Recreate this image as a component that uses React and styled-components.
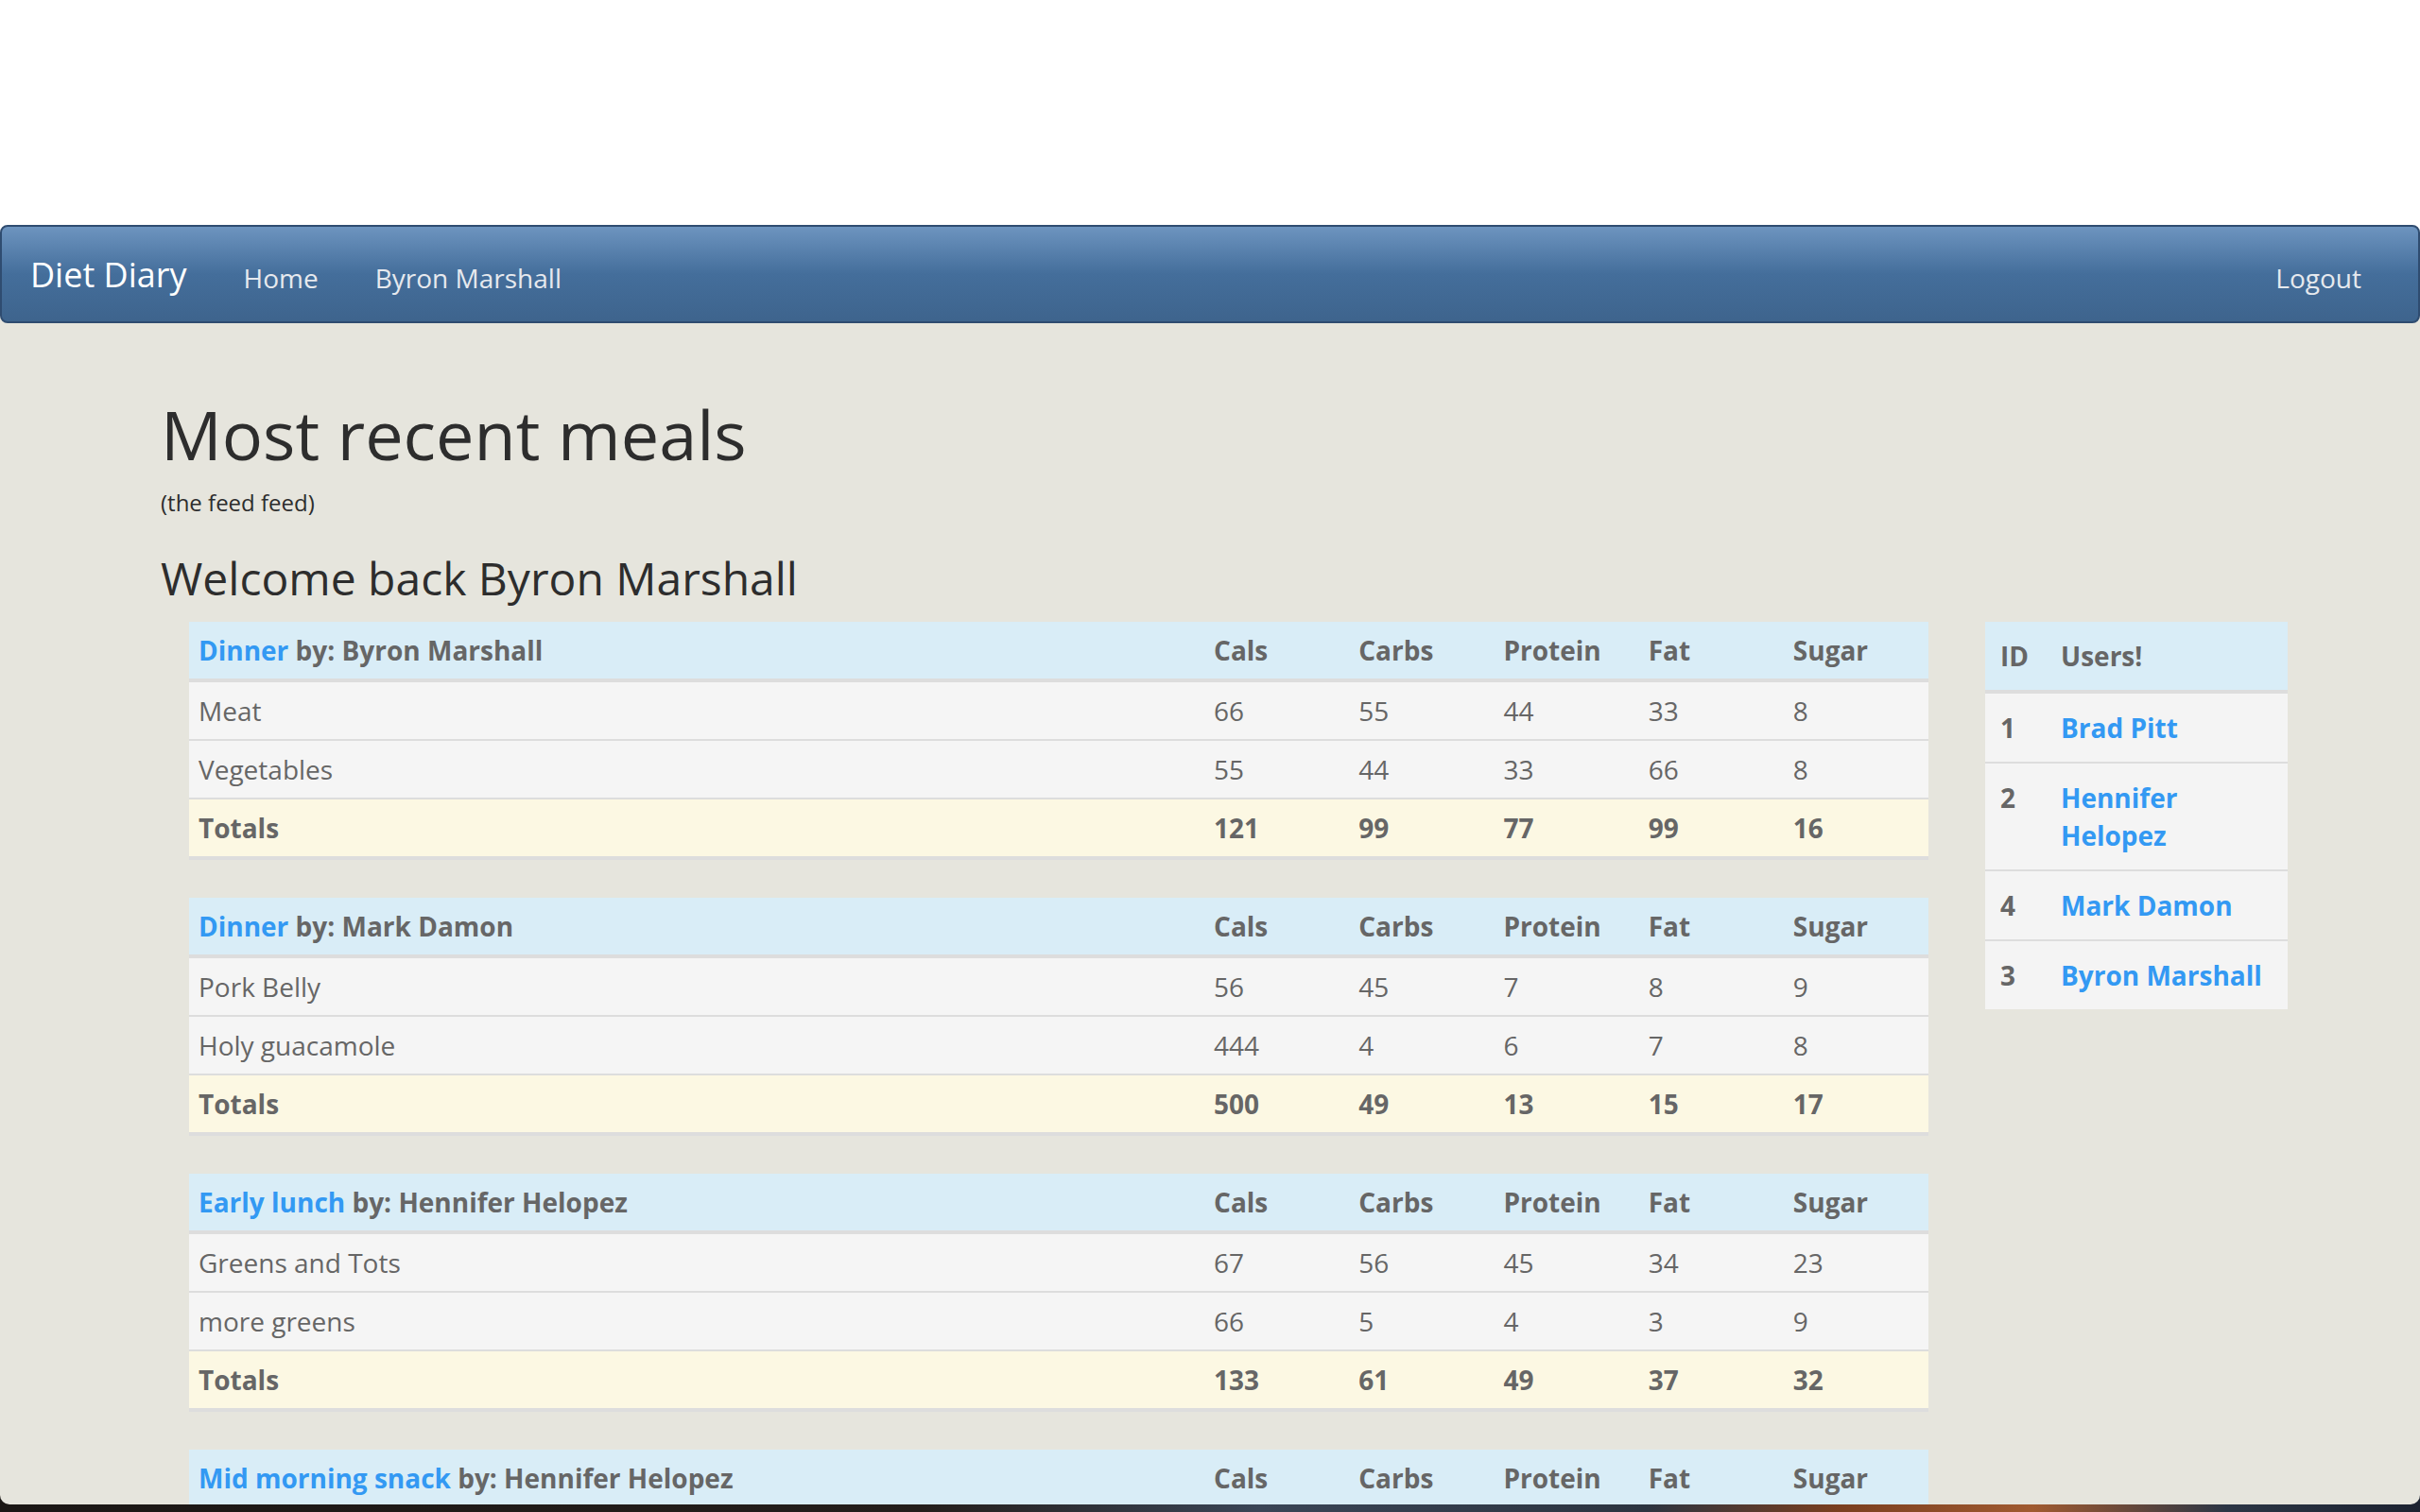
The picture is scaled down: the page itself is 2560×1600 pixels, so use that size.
import React from 'react';
import styled, { createGlobalStyle } from 'styled-components';

const GlobalStyle = createGlobalStyle`
  html, body {
    margin: 0;
    padding: 0;
  }
  body {
    font-family: "Open Sans", "Liberation Sans", sans-serif;
    color: #666666;
    background: #ffffff;
  }
  * { box-sizing: border-box; }
`;

const meals = [
  {
    id: 1,
    name: 'Dinner',
    user: 'Byron Marshall',
    items: [
      { name: 'Meat', vals: [66, 55, 44, 33, 8] },
      { name: 'Vegetables', vals: [55, 44, 33, 66, 8] },
    ],
  },
  {
    id: 2,
    name: 'Dinner',
    user: 'Mark Damon',
    items: [
      { name: 'Pork Belly', vals: [56, 45, 7, 8, 9] },
      { name: 'Holy guacamole', vals: [444, 4, 6, 7, 8] },
    ],
  },
  {
    id: 3,
    name: 'Early lunch',
    user: 'Hennifer Helopez',
    items: [
      { name: 'Greens and Tots', vals: [67, 56, 45, 34, 23] },
      { name: 'more greens', vals: [66, 5, 4, 3, 9] },
    ],
  },
  {
    id: 4,
    name: 'Mid morning snack',
    user: 'Hennifer Helopez',
    items: [
      { name: 'Banana', vals: [105, 27, 1, 0, 14] },
    ],
  },
];

const users = [
  { id: 1, name: 'Brad Pitt' },
  { id: 2, name: 'Hennifer Helopez' },
  { id: 4, name: 'Mark Damon' },
  { id: 3, name: 'Byron Marshall' },
];

const columns = ['Cals', 'Carbs', 'Protein', 'Fat', 'Sugar'];

const Page = styled.div`
  width: 2560px;
  height: 1600px;
  display: flex;
  flex-direction: column;
  overflow: hidden;
  background: linear-gradient(90deg, #1b1715 0%, #241e1b 38%, #3a4556 52%, #2c3440 68%, #7a3f20 76%, #a05a30 84%, #2c3645 92%, #1c2230 100%);
`;

const TopGap = styled.div`
  height: 238px;
  flex-shrink: 0;
  background: #ffffff;
`;

const Window = styled.div`
  flex: 1;
  min-height: 0;
  margin-bottom: 8px;
  background: #e6e5dd;
  border-radius: 0 0 10px 10px;
  overflow: hidden;
`;

const NavWrap = styled.div`
  background: linear-gradient(#ffffff 50%, #e6e5dd 50%);
`;

const Navbar = styled.nav`
  height: 104px;
  display: flex;
  align-items: flex-start;
  border: 2px solid #2f4c70;
  border-radius: 8px;
  background-image: linear-gradient(#6d94bf, #446e9b 50%, #3e648d);
`;

const Brand = styled.a`
  padding: 31px 30px 29px;
  font-size: 36px;
  line-height: 40px;
  color: #ffffff;
  text-decoration: none;
`;

const NavLink = styled.a`
  padding: 34px 30px 26px;
  font-size: 28px;
  line-height: 40px;
  color: #e6e9ee;
  text-decoration: none;
  margin-left: ${(p) => (p.$right ? 'auto' : '0')};
  margin-right: ${(p) => (p.$right ? '30px' : '0')};
`;

const Content = styled.main`
  padding: 78px 0 0 170px;
`;

const Title = styled.h1`
  margin: 0;
  font-size: 72px;
  line-height: 79px;
  font-weight: 400;
  color: #2d2d2d;
`;

const Subtitle = styled.h6`
  margin: 20px 0 0;
  font-size: 24px;
  line-height: 26px;
  font-weight: 400;
  color: #2d2d2d;
`;

const Welcome = styled.h3`
  margin: 40px 0 0;
  font-size: 48px;
  line-height: 53px;
  font-weight: 400;
  color: #2d2d2d;
`;

const Columns = styled.div`
  display: flex;
  align-items: flex-start;
  gap: 60px;
  margin: 20px 0 0 30px;
`;

const Meals = styled.div`
  width: 1840px;
  flex-shrink: 0;
`;

const Sidebar = styled.aside`
  width: 320px;
  flex-shrink: 0;
`;

const MealTable = styled.table`
  width: 100%;
  border-collapse: collapse;
  table-layout: fixed;
  margin-bottom: 40px;
  font-size: 28px;
  line-height: 40px;
  color: #666666;

  th, td {
    padding: 10px;
    text-align: left;
    vertical-align: top;
  }
  th:not(:first-child) {
    width: 153.2px;
  }
  thead th {
    background: #d9edf7;
    border-bottom: 4px solid #dddddd;
    font-weight: 700;
    white-space: nowrap;
  }
  tbody td {
    border-top: 2px solid #dddddd;
    background: #f5f5f5;
  }
  tbody tr:last-child td {
    border-bottom: 4px solid #dddddd;
  }
`;

const TotalsRow = styled.tr`
  td {
    background: #fcf8e3 !important;
    font-weight: 700;
  }
`;

const Link = styled.a`
  color: #3399f3;
  text-decoration: none;
  font-weight: 700;
`;

const UsersTable = styled.table`
  width: 100%;
  border-collapse: collapse;
  table-layout: fixed;
  font-size: 28px;
  line-height: 40px;
  color: #666666;
  font-weight: 700;

  th, td {
    padding: 16px;
    text-align: left;
    vertical-align: top;
  }
  th:first-child {
    width: 64px;
  }
  thead th {
    background: #d9edf7;
    border-bottom: 4px solid #dddddd;
  }
  tbody td {
    border-top: 2px solid #dddddd;
    background: #f4f4f4;
  }
`;

const MealCard = ({ meal }) => {
  const totals = columns.map((_, i) =>
    meal.items.reduce((sum, item) => sum + item.vals[i], 0)
  );
  return (
    <MealTable>
      <thead>
        <tr>
          <th>
            <Link href="#">{meal.name}</Link> by: {meal.user}
          </th>
          {columns.map((c) => (
            <th key={c}>{c}</th>
          ))}
        </tr>
      </thead>
      <tbody>
        {meal.items.map((item) => (
          <tr key={item.name}>
            <td>{item.name}</td>
            {item.vals.map((v, i) => (
              <td key={i}>{v}</td>
            ))}
          </tr>
        ))}
        <TotalsRow>
          <td>Totals</td>
          {totals.map((v, i) => (
            <td key={i}>{v}</td>
          ))}
        </TotalsRow>
      </tbody>
    </MealTable>
  );
};

const App = () => {
  return (
    <Page>
      <GlobalStyle />
      <TopGap />
      <Window>
        <NavWrap>
          <Navbar>
            <Brand href="#">Diet Diary</Brand>
            <NavLink href="#">Home</NavLink>
            <NavLink href="#">Byron Marshall</NavLink>
            <NavLink href="#" $right>Logout</NavLink>
          </Navbar>
        </NavWrap>
        <Content>
          <Title>Most recent meals</Title>
          <Subtitle>(the feed feed)</Subtitle>
          <Welcome>Welcome back Byron Marshall</Welcome>
          <Columns>
            <Meals>
              {meals.map((meal) => (
                <MealCard key={meal.id} meal={meal} />
              ))}
            </Meals>
            <Sidebar>
              <UsersTable>
                <thead>
                  <tr>
                    <th>ID</th>
                    <th>Users!</th>
                  </tr>
                </thead>
                <tbody>
                  {users.map((u) => (
                    <tr key={u.id}>
                      <td>{u.id}</td>
                      <td>
                        <Link href="#">{u.name}</Link>
                      </td>
                    </tr>
                  ))}
                </tbody>
              </UsersTable>
            </Sidebar>
          </Columns>
        </Content>
      </Window>
    </Page>
  );
};

export default App;
